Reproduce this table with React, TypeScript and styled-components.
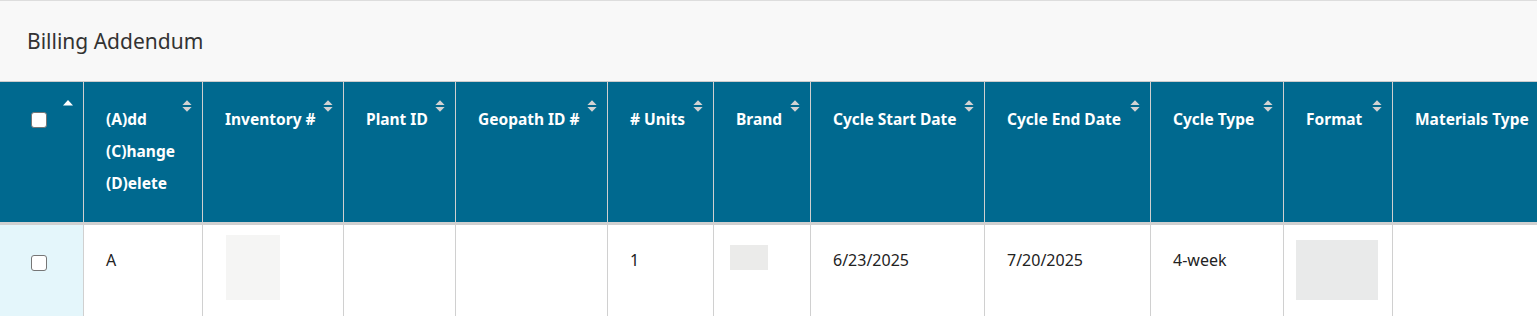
import React from "react";
import styled, { createGlobalStyle } from "styled-components";

const GlobalStyle = createGlobalStyle`
  html, body {
    margin: 0;
    padding: 0;
    background: #ffffff;
    overflow: hidden;
  }
  body {
    font-family: "Noto Sans", "Open Sans", Arial, sans-serif;
  }
  * { box-sizing: border-box; }
`;

const Panel = styled.section`
  width: 100%;
  border-top: 1px solid #dddddd;
  background: #ffffff;
  overflow: hidden;
`;

const PanelHeading = styled.header`
  display: flex;
  align-items: center;
  height: 81px;
  padding: 0 27px;
  background: #f8f8f8;
  border-bottom: 1px solid #cccccc;
`;

const Title = styled.h2`
  margin: 0;
  font-family: "Noto Sans", "Open Sans", Arial, sans-serif;
  font-size: 21px;
  font-weight: 400;
  color: #333333;
`;

const TableScroller = styled.div`
  width: 100%;
  overflow: hidden;
`;

const Table = styled.table<{ $width: number }>`
  width: ${(p) => p.$width}px;
  table-layout: fixed;
  border-collapse: separate;
  border-spacing: 0;
`;

const Col = styled.col<{ $width: number }>`
  width: ${(p) => p.$width}px;
`;

const HeadCell = styled.th`
  position: relative;
  vertical-align: top;
  text-align: left;
  padding: 21px 30px 23px 22px;
  background: #00698f;
  color: #ffffff;
  font-family: "Noto Sans", "Open Sans", Arial, sans-serif;
  font-size: 15.5px;
  font-weight: 700;
  line-height: 32px;
  white-space: nowrap;
  border-right: 1px solid #cfcfcf;
  border-bottom: 3px solid #d0d0d0;
`;

const SelectHead = styled(HeadCell)`
  padding: 30px 0 0 31px;
`;

const SortMark = styled.svg`
  position: absolute;
  top: 18px;
  right: 10px;
  width: 10px;
  height: 12px;
`;

const BodyCell = styled.td`
  vertical-align: top;
  height: 100px;
  padding: 10px 22px 0;
  font-family: "Noto Sans", "Open Sans", Arial, sans-serif;
  font-size: 16px;
  line-height: 24px;
  color: #222222;
  white-space: nowrap;
  border-right: 1px solid #d0d0d0;
`;

const SelectCell = styled(BodyCell)`
  padding: 30px 0 0 31px;
  background: #e4f6fb;
`;

const Value = styled.span`
  display: block;
  padding-top: 13px;
`;

const Placeholder = styled.div<{
  $w: number;
  $h: number;
  $top: number;
  $left: number;
  $bg: string;
}>`
  width: ${(p) => p.$w}px;
  height: ${(p) => p.$h}px;
  margin-top: ${(p) => p.$top}px;
  margin-left: ${(p) => p.$left}px;
  background: ${(p) => p.$bg};
`;

const Check = styled.input.attrs({ type: "checkbox" })`
  appearance: none;
  -webkit-appearance: none;
  display: block;
  margin: 0;
  width: 16px;
  height: 16px;
  border: 1.5px solid #767676;
  border-radius: 3px;
  background: #ffffff;
  cursor: pointer;
`;

type Column = {
  key: string;
  width: number;
  label?: React.ReactNode;
  sortable?: boolean;
};

const columns: Column[] = [
  { key: "select", width: 84 },
  {
    key: "action",
    width: 119,
    sortable: true,
    label: (
      <>
        (A)dd
        <br />
        (C)hange
        <br />
        (D)elete
      </>
    ),
  },
  { key: "inventory", width: 141, label: "Inventory #", sortable: true },
  { key: "plant", width: 112, label: "Plant ID", sortable: true },
  { key: "geopath", width: 152, label: "Geopath ID #", sortable: true },
  { key: "units", width: 106, label: "# Units", sortable: true },
  { key: "brand", width: 97, label: "Brand", sortable: true },
  { key: "start", width: 174, label: "Cycle Start Date", sortable: true },
  { key: "end", width: 166, label: "Cycle End Date", sortable: true },
  { key: "cycleType", width: 133, label: "Cycle Type", sortable: true },
  { key: "format", width: 109, label: "Format", sortable: true },
  { key: "materials", width: 170, label: "Materials Type", sortable: true },
];

const tableWidth = columns.reduce((sum, c) => sum + c.width, 0);

function SortBoth() {
  return (
    <SortMark viewBox="0 0 10 12" aria-hidden="true">
      <path d="M5 0.3 L9.6 5 H0.4 Z" fill="#d2d2d2" />
      <path d="M0.4 7 H9.6 L5 11.7 Z" fill="#d2d2d2" />
    </SortMark>
  );
}

function SortAsc() {
  return (
    <SortMark viewBox="0 0 10 12" aria-hidden="true">
      <path d="M5 0 L10 5.6 H0 Z" fill="#ffffff" />
    </SortMark>
  );
}

export default function App() {
  return (
    <>
      <GlobalStyle />
      <Panel>
        <PanelHeading>
          <Title>Billing Addendum</Title>
        </PanelHeading>
        <TableScroller>
          <Table $width={tableWidth}>
            <colgroup>
              {columns.map((c) => (
                <Col key={c.key} $width={c.width} />
              ))}
            </colgroup>
            <thead>
              <tr>
                <SelectHead>
                  <Check aria-label="Select all rows" />
                  <SortAsc />
                </SelectHead>
                {columns.slice(1).map((c) => (
                  <HeadCell key={c.key}>
                    {c.label}
                    {c.sortable && <SortBoth />}
                  </HeadCell>
                ))}
              </tr>
            </thead>
            <tbody>
              <tr>
                <SelectCell>
                  <Check aria-label="Select row" />
                </SelectCell>
                <BodyCell>
                  <Value>A</Value>
                </BodyCell>
                <BodyCell>
                  <Placeholder $w={54} $h={65} $top={0} $left={1} $bg="#f5f5f4" />
                </BodyCell>
                <BodyCell />
                <BodyCell />
                <BodyCell>
                  <Value>1</Value>
                </BodyCell>
                <BodyCell>
                  <Placeholder $w={38} $h={25} $top={10} $left={-6} $bg="#ebebea" />
                </BodyCell>
                <BodyCell>
                  <Value>6/23/2025</Value>
                </BodyCell>
                <BodyCell>
                  <Value>7/20/2025</Value>
                </BodyCell>
                <BodyCell>
                  <Value>4-week</Value>
                </BodyCell>
                <BodyCell>
                  <Placeholder $w={82} $h={60} $top={5} $left={-10} $bg="#e9eaea" />
                </BodyCell>
                <BodyCell />
              </tr>
            </tbody>
          </Table>
        </TableScroller>
      </Panel>
    </>
  );
}
